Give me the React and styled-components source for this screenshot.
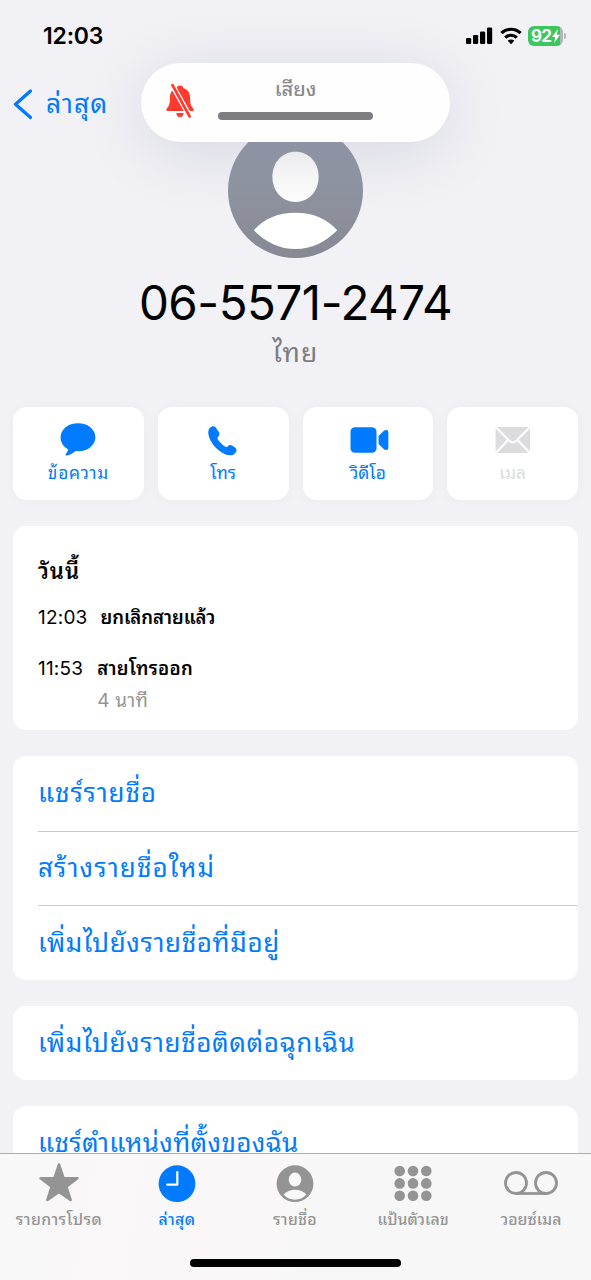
import styled, { createGlobalStyle } from 'styled-components'

const BLUE = '#007aff'
const GREY = '#949494'

const recents = [
  { time: '12:03', title: 'ยกเลิกสายแล้ว', tracking: -0.05 },
  { time: '11:53', title: 'สายโทรออก', tracking: 0.3, note: '4 นาที' },
]

const contactRows = [
  { label: 'แชร์รายชื่อ', tracking: 0.9 },
  { label: 'สร้างรายชื่อใหม่', tracking: 1.15 },
  { label: 'เพิ่มไปยังรายชื่อที่มีอยู่', tracking: 0.65 },
]

export default function App() {
  return (
    <Screen>
      <GlobalStyle />
      <Content>
        <StatusBar>
          <Clock>12:03</Clock>
          <StatusIcons>
            <SignalIcon />
            <WifiIcon />
            <BatteryIcon>
              <Battery>92<BoltIcon /></Battery>
              <BatteryTip />
            </BatteryIcon>
          </StatusIcons>
        </StatusBar>

        <NavBar>
          <BackIcon />
          <BackLabel>ล่าสุด</BackLabel>
        </NavBar>

        <Profile>
          <AvatarIcon />
          <PhoneNumber>06-5571-2474</PhoneNumber>
          <Country>ไทย</Country>
        </Profile>

        <Actions>
          <Action><MessageIcon /><ActionLabel $tracking={0.7}>ข้อความ</ActionLabel></Action>
          <Action><PhoneIcon /><ActionLabel>โทร</ActionLabel></Action>
          <Action><VideoIcon /><ActionLabel>วิดีโอ</ActionLabel></Action>
          <Action $disabled><MailIcon /><ActionLabel>เมล</ActionLabel></Action>
        </Actions>

        <History>
          <HistoryTitle>วันนี้</HistoryTitle>
          {recents.map((call) => (
            <Call key={call.time}>
              <CallTime>{call.time}</CallTime>
              <CallInfo>
                <CallTitle $tracking={call.tracking}>{call.title}</CallTitle>
                {call.note && <CallNote>{call.note}</CallNote>}
              </CallInfo>
            </Call>
          ))}
        </History>

        <Group>
          {contactRows.map((row) => (
            <Row key={row.label}><RowLabel $tracking={row.tracking}>{row.label}</RowLabel></Row>
          ))}
        </Group>
        <Group>
          <Row><RowLabel $tracking={0.6}>เพิ่มไปยังรายชื่อติดต่อฉุกเฉิน</RowLabel></Row>
        </Group>
        <Group>
          <Row><RowLabel $tracking={0.35}>แชร์ตำแหน่งที่ตั้งของฉัน</RowLabel></Row>
        </Group>
      </Content>

      <TabBar>
        <Tabs>
          <Tab><StarIcon /><TabLabel $tracking={0.45}>รายการโปรด</TabLabel></Tab>
          <Tab $active><ClockIcon /><TabLabel $tracking={0.4}>ล่าสุด</TabLabel></Tab>
          <Tab><PersonIcon /><TabLabel $tracking={0.3}>รายชื่อ</TabLabel></Tab>
          <Tab><KeypadIcon /><TabLabel>แป้นตัวเลข</TabLabel></Tab>
          <Tab><VoicemailIcon /><TabLabel>วอยซ์เมล</TabLabel></Tab>
        </Tabs>
        <HomeIndicator />
      </TabBar>

      <SoundBanner>
        <BellIcon />
        <SoundInfo>
          <SoundLabel>เสียง</SoundLabel>
          <SoundTrack />
        </SoundInfo>
      </SoundBanner>
    </Screen>
  )
}

const SignalIcon = () => (
  <svg width="28" height="18" viewBox="0 0 28 18">
    <rect x="0" y="11" width="5.2" height="6" rx="1.3" />
    <rect x="7" y="8" width="5.2" height="9" rx="1.3" />
    <rect x="14" y="4.5" width="5.2" height="12.5" rx="1.3" />
    <rect x="21" y="0.5" width="5.2" height="16.5" rx="1.3" />
  </svg>
)

const WifiIcon = () => (
  <svg width="22" height="18" viewBox="0 0 22 18" fill="none" stroke="#000" strokeWidth="3.2">
    <path d="M1.4 6.2a13.6 13.6 0 0 1 19.2 0" />
    <path d="M5.2 10.6a8.3 8.3 0 0 1 11.6 0" />
    <path d="M11 17.2 7.7 13.8a4.7 4.7 0 0 1 6.6 0z" fill="#000" stroke="none" />
  </svg>
)

const BoltIcon = () => (
  <svg width="8" height="14" viewBox="0 0 8 14" fill="#fff">
    <path d="M5.8 0 0 8h3.2L2.2 14 8 5.8H4.8z" />
  </svg>
)

const BackIcon = () => (
  <svg width="20" height="32" viewBox="0 0 20 32" fill="none" stroke={BLUE} strokeWidth="3.3" strokeLinecap="round" strokeLinejoin="round">
    <path d="M18.5 3 3.5 16.3l15 13.2" />
  </svg>
)

const AvatarIcon = () => (
  <svg width="135" height="135" viewBox="0 0 136 136">
    <defs>
      <linearGradient id="avatar" x1="0" y1="0" x2="0" y2="1">
        <stop offset="0.15" stopColor="#979dac" />
        <stop offset="1" stopColor="#868892" />
      </linearGradient>
      <linearGradient id="head" x1="0" y1="0" x2="0" y2="1">
        <stop offset="0" stopColor="#f8f8f8" />
        <stop offset="1" stopColor="#fff" />
      </linearGradient>
    </defs>
    <circle cx="68" cy="68" r="68" fill="url(#avatar)" />
    <path d="M68 29c13.5 0 23.3 10.9 23.3 25.2S81.5 79.6 68 79.6 44.7 68.5 44.7 54.2 54.5 29 68 29z" fill="url(#head)" />
    <path d="M26 108C37 96 51 90.5 68 90.5s31 5.5 42 17.5C98 120 84 127 68 127s-30-7-42-19z" fill="#fff" />
  </svg>
)

const MessageIcon = () => (
  <svg width="36" height="34" viewBox="0 0 36 34" fill="currentColor">
    <path d="M18 .2c9.9 0 17.4 6.2 17.4 14S27.9 28.2 18 28.2c-.8 0-1.5 0-2.2-.1-3 2.1-6.2 4.1-9 4.4-1.2.1-1.6-1-.9-1.8 1.3-1.4 2-2.8 2.2-4.5C3.2 23.500.6 19.4.6 14.2.6 6.4 8.1.2 18 .2z" />
  </svg>
)

const PhoneIcon = () => (
  <svg width="30" height="34" viewBox="0 0 30 34" fill="currentColor">
    <path d="M2.7 4.6C4.6 2.7 7.2 2.4 8.7 4.7l3.1 4.8c1 1.6.7 3-.7 4.5-1 1-1.2 1.8-.4 3 2 3 4.3 5.3 7.3 7.3 1.2.8 2 .6 3-.4 1.5-1.4 2.9-1.7 4.5-.7l3 2.1c2.2 1.5 1.9 4.1.1 5.9-2.6 2.7-6.6 3-11 .9C10 28.5 3.8 21.5 1.4 13.9.3 10.2.4 6.9 2.7 4.6z" transform="translate(-.4 .2) scale(.96)" />
  </svg>
)

const VideoIcon = () => (
  <svg width="42" height="34" viewBox="0 0 42 34" fill="currentColor">
    <rect x="3.5" y="4.3" width="26" height="25.5" rx="4.5" />
    <path d="M31.6 13l4.8-4.8c2.2-2 4.9-1.6 4.9 1v15.6c0 2.6-2.7 3-4.9 1L31.6 21z" />
  </svg>
)

const MailIcon = () => (
  <svg width="36" height="34" viewBox="0 0 36 34">
    <rect x="0.6" y="4" width="34.4" height="26" rx="2" fill="currentColor" />
    <path d="M1.1 4.5 14.6 18q3.2 3 6.4 0L34.5 4.5M1.1 29.5 13.1 17M34.5 29.5 22.5 17" fill="none" stroke="#fff" strokeWidth="2" />
  </svg>
)

const StarIcon = () => (
  <svg width="42" height="40" viewBox="0 0 42 40" fill="currentColor" stroke="currentColor" strokeWidth="2.6" strokeLinejoin="round">
    <path d="M21 1.6 25.5 15 39.4 15.2 28.3 23.6 32.6 36.9 21 28.9 9.4 36.9 13.7 23.6 2.6 15.2 16.5 15z" />
  </svg>
)

const ClockIcon = () => (
  <svg width="38" height="40" viewBox="0 0 38 40">
    <circle cx="19" cy="20.7" r="18.4" fill="currentColor" />
    <path d="M19.3 9v12.6H9.2" fill="none" stroke="#fff" strokeWidth="2.2" strokeLinecap="round" strokeLinejoin="round" />
  </svg>
)

const PersonIcon = () => (
  <svg width="38" height="40" viewBox="0 0 38 40">
    <circle cx="19" cy="20.7" r="18.4" fill="currentColor" />
    <ellipse cx="19" cy="16.6" rx="6.3" ry="7" fill="#f8f8f8" />
    <path d="M7.6 31.6C10.4 28.3 14.4 26.8 19 26.8s8.6 1.5 11.4 4.8C27.3 35 23.4 36.8 19 36.8S10.7 35 7.6 31.6z" fill="#f8f8f8" />
  </svg>
)

const KeypadIcon = () => (
  <svg width="38" height="40" viewBox="0 0 38 40" fill="currentColor">
    {[8, 20.4, 32.8].map((y) => [5.7, 19, 32.3].map((x) => (
      <circle key={`${x}-${y}`} cx={x} cy={y} r="5.3" />
    )))}
  </svg>
)

const VoicemailIcon = () => (
  <svg width="54" height="40" viewBox="0 0 54 40" fill="none" stroke="currentColor" strokeWidth="2.8">
    <circle cx="12" cy="20" r="10.5" />
    <circle cx="42" cy="20" r="10.5" />
    <path d="M12 30.5h30" />
  </svg>
)

const BellIcon = () => (
  <svg width="30" height="38" viewBox="0 0 30 38" fill="#ff3b30">
    <path d="M15 3.6c1.7 0 3 .9 3.3 2.3 4.8 1.4 6.8 5 6.8 9.8 0 6 .7 7.9 3.1 10.8.9 1.1.6 2.4-.8 2.4H2.6c-1.4 0-1.7-1.3-.8-2.4 2.4-2.9 3.1-4.8 3.1-10.8 0-4.8 2-8.4 6.8-9.8.3-1.4 1.6-2.3 3.3-2.3zM11.3 31h7.4c-.2 2.5-1.6 4.3-3.7 4.3s-3.5-1.8-3.7-4.3z" />
    <path d="M5.5 0 26.6 37.5" stroke="#fff" strokeWidth="5.4" />
    <path d="M7.5 3.2 24.6 34.4" stroke="#ff3b30" strokeWidth="2.8" strokeLinecap="round" />
  </svg>
)

const GlobalStyle = createGlobalStyle`
  * {
    box-sizing: border-box;
  }

  body {
    margin: 0;
    background: #f1f1f6;
    font-family: Inter, "Noto Sans Thai Looped", "Noto Looped Thai", "Noto Sans Thai", "Noto Sans", sans-serif;
  }

  svg {
    display: block;
    flex-shrink: 0;
  }
`

const Screen = styled.main`
  position: relative;
  width: 591px;
  height: 1280px;
  display: flex;
  flex-direction: column;
  overflow: hidden;
  color: #000;
  white-space: nowrap;
`

const Content = styled.div`
  flex: 1;
  min-height: 0;
  overflow: hidden;
`

const StatusBar = styled.header`
  height: 71px;
  padding: 0 25px 0 43px;
  display: flex;
  align-items: center;
  justify-content: space-between;
`

const Clock = styled.span`
  font-size: 23px;
  font-weight: 600;
  letter-spacing: -0.2px;
`

const StatusIcons = styled.div`
  display: flex;
  align-items: center;
  gap: 6px;
`

const BatteryIcon = styled.div`
  display: flex;
  align-items: center;
  gap: 1px;
`

const Battery = styled.div`
  width: 35px;
  height: 20px;
  border-radius: 6px;
  display: flex;
  align-items: center;
  justify-content: center;
  gap: 1px;
  color: #fff;
  background: linear-gradient(90deg, #3dc65d 92%, #b3b5b7 92%);
  font-size: 17px;
  font-weight: 700;
  letter-spacing: -0.9px;
`

const BatteryTip = styled.div`
  width: 2px;
  height: 6px;
  border-radius: 0 2px 2px 0;
  background: #b3b5b7;
`

const NavBar = styled.nav`
  height: 52px;
  padding: 17px 0 0 12px;
  display: flex;
  gap: 14px;
`

const BackLabel = styled.span`
  color: ${BLUE};
  font-size: 26.5px;
  line-height: 31px;
  letter-spacing: 1px;
`

const Profile = styled.section`
  display: flex;
  flex-direction: column;
  align-items: center;
`

const PhoneNumber = styled.h1`
  margin: 15px 0 0;
  font-size: 47.5px;
  font-weight: 400;
  line-height: 60px;
  letter-spacing: -0.5px;
`

const Country = styled.p`
  margin: 2px 0 0;
  color: #7c7c80;
  font-size: 26.5px;
  line-height: 34px;
  letter-spacing: 1.1px;
`

const Actions = styled.section`
  margin: 38px 13px 0;
  display: grid;
  grid-template-columns: repeat(4, 1fr);
  gap: 14px;
`

const Action = styled.button`
  height: 93px;
  padding: 16px 0 0;
  border: 0;
  border-radius: 14px;
  display: flex;
  flex-direction: column;
  align-items: center;
  color: ${({ $disabled }) => ($disabled ? '#dcdcde' : BLUE)};
  background: #fff;
  box-shadow: 0 0 16px rgba(0, 0, 40, 0.03);
  font-family: inherit;
`

const ActionLabel = styled.span`
  font-size: 17.3px;
  line-height: 32px;
  letter-spacing: ${({ $tracking = 0 }) => $tracking}px;
`

const Card = styled.section`
  margin: 25.7px 13px 0;
  border-radius: 13px;
  background: #fff;
`

const History = styled(Card)`
  height: 204.5px;
  padding: 27px 25px 0;
`

const HistoryTitle = styled.h2`
  margin: 0 0 13px;
  font-size: 22px;
  font-weight: 600;
  line-height: 36px;
  letter-spacing: 1px;
`

const Call = styled.div`
  display: flex;
  gap: 13px;
  margin-bottom: 19px;
  font-size: 19px;
  line-height: 32px;

  & + & {
    gap: 14px;
  }
`

const CallTime = styled.time`
  letter-spacing: 0.2px;
`

const CallInfo = styled.div`
  display: flex;
  flex-direction: column;
`

const CallTitle = styled.strong`
  font-size: 18.5px;
  font-weight: 600;
  line-height: 31px;
  letter-spacing: ${({ $tracking = 0 }) => $tracking}px;
`

const CallNote = styled.span`
  color: #949494;
  font-size: 19px;
  line-height: 33px;
  letter-spacing: 0.2px;
`

const Group = styled(Card)`
  padding-left: 25px;
`

const Row = styled.div`
  height: 74.7px;
  display: flex;
  align-items: center;
  color: ${BLUE};
  font-size: 26px;

  & + & {
    border-top: 1px solid #c9c9cb;
  }
`

const RowLabel = styled.span`
  line-height: 40px;
  letter-spacing: ${({ $tracking = 0 }) => $tracking}px;
`

const TabBar = styled.footer`
  height: 127px;
  border-top: 1px solid #adadaf;
  display: flex;
  flex-direction: column;
  align-items: center;
  background: linear-gradient(100deg, #f8f8f9, #fbf7f8 35%, #f7f7f8 60%);
`

const Tabs = styled.nav`
  width: 100%;
  height: 105px;
  padding: 9px 1px 0 0;
  display: grid;
  grid-template-columns: repeat(5, 1fr);
`

const Tab = styled.div`
  display: flex;
  flex-direction: column;
  align-items: center;
  color: ${({ $active }) => ($active ? BLUE : GREY)};
`

const TabLabel = styled.span`
  font-size: 15.8px;
  font-weight: 500;
  line-height: 33px;
  letter-spacing: ${({ $tracking = 0 }) => $tracking}px;
`

const HomeIndicator = styled.div`
  width: 211px;
  height: 8px;
  border-radius: 4px;
  background: #000;
`

/* floats above the page while the ringer switch changes */
const SoundBanner = styled.aside`
  position: absolute;
  top: 63px;
  left: 141px;
  width: 309px;
  height: 79px;
  padding: 19px 24px 0;
  border-radius: 40px;
  display: flex;
  gap: 23px;
  background: #fefefe;
  box-shadow: 0 10px 70px rgba(20, 10, 60, 0.11);
`

const SoundInfo = styled.div`
  width: 155px;
  margin-top: -8px;
  display: flex;
  flex-direction: column;
  align-items: center;
`

const SoundLabel = styled.span`
  margin-bottom: 8px;
  color: #8a8a8e;
  font-size: 20px;
  font-weight: 500;
  line-height: 30px;
`

const SoundTrack = styled.div`
  width: 155px;
  height: 8px;
  border-radius: 4px;
  background: #7e7d82;
`
